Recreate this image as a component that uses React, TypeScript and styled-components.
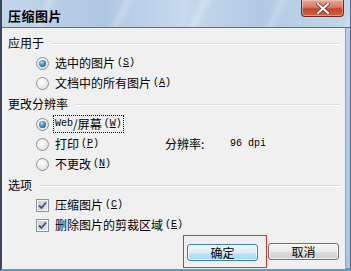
import styled, { createGlobalStyle } from 'styled-components';

const GlobalStyle = createGlobalStyle`
  html, body {
    margin: 0;
    padding: 0;
    background: #ffffff;
  }
  body {
    width: 351px;
    height: 271px;
    overflow: hidden;
    font-family: "Noto Sans CJK SC", "Noto Sans", sans-serif;
    color: #000;
  }
`;

const Window = styled.div`
  width: 351px;
  height: 271px;
  box-sizing: border-box;
  display: flex;
  flex-direction: column;
  border-left: 2px solid #3b4756;
  border-right: 1px solid #4d6a86;
  border-bottom: 3px solid #5b9bc3;
  background: linear-gradient(180deg, #b7cfe7 0%, #a8c6e0 100%);
`;

const TitleBar = styled.div`
  height: 28px;
  flex-shrink: 0;
  box-sizing: border-box;
  display: flex;
  align-items: flex-start;
  justify-content: space-between;
  border-bottom: 1px solid #58708b;
  background:
    repeating-linear-gradient(115deg, rgba(255, 255, 255, 0) 0px, rgba(255, 255, 255, 0) 38px,
      rgba(255, 255, 255, 0.22) 44px, rgba(255, 255, 255, 0) 52px, rgba(255, 255, 255, 0) 70px),
    linear-gradient(90deg, #c4d7eb 0%, #aec7e1 28%, #c7daee 52%, #b0c9e3 74%, #c3d7ec 100%);
`;

const Title = styled.div`
  align-self: center;
  margin: 4px 0 0 6px;
  font-size: 13px;
  font-weight: 700;
  letter-spacing: 0.5px;
  line-height: 16px;
`;

const CloseButton = styled.div`
  width: 43px;
  height: 17px;
  margin-right: 6px;
  box-sizing: border-box;
  display: flex;
  align-items: center;
  justify-content: center;
  border: 1px solid #6b2a1e;
  border-top: none;
  border-radius: 0 0 4px 4px;
  background: linear-gradient(180deg, #e8a898 0%, #d77a63 45%, #c5452a 55%, #d0623f 100%);
  box-shadow: inset 0 0 0 1px rgba(255, 220, 210, 0.45);
`;

const Content = styled.div`
  flex: 1;
  margin-right: 4px;
  box-sizing: border-box;
  display: flex;
  flex-direction: column;
  padding: 4px 0 0 6px;
  background: #f0f0f0;
  border-right: 1px solid #8ba5bf;
  font-size: 12px;
`;

const GroupHeader = styled.div`
  height: 21px;
  display: flex;
  align-items: center;
  line-height: 21px;
`;

const GroupLine = styled.div`
  flex: 1;
  height: 0;
  margin: 2px 5px 0 7px;
  border-top: 1px solid #d5dce3;
  border-bottom: 1px solid #ffffff;
`;

const OptionRow = styled.div`
  height: 20px;
  display: flex;
  align-items: center;
  padding-left: 28px;
  line-height: 20px;
`;

const OptionMain = styled.div<{ $width?: number }>`
  display: flex;
  align-items: center;
  width: ${(p) => (p.$width ? `${p.$width}px` : 'auto')};
`;

const RadioDot = styled.span<{ $checked?: boolean }>`
  width: 13px;
  height: 13px;
  flex-shrink: 0;
  box-sizing: border-box;
  border-radius: 50%;
  border: 1px solid #8d9297;
  background: radial-gradient(circle at 40% 35%, #ffffff 0%, #e9eaec 55%, #cfd2d6 100%);
  display: flex;
  align-items: center;
  justify-content: center;
  margin-right: 4px;

  &::after {
    content: '';
    width: 7px;
    height: 7px;
    border-radius: 50%;
    background: ${(p) =>
      p.$checked
        ? 'radial-gradient(circle at 40% 35%, #b6e2fb 0%, #3b8ccb 45%, #124b7f 100%)'
        : 'transparent'};
  }
`;

const CheckBox = styled.span`
  width: 13px;
  height: 13px;
  flex-shrink: 0;
  box-sizing: border-box;
  border: 1px solid #8e9196;
  background: linear-gradient(135deg, #c4ccd8 0%, #dde3ea 100%);
  box-shadow: inset 0 0 0 1px #f4f5f7;
  display: flex;
  align-items: center;
  justify-content: center;
  margin-right: 4px;
`;

const Label = styled.span<{ $focused?: boolean }>`
  display: inline-flex;
  align-items: center;
  height: 16px;
  padding: 0 1px;
  border: 1px dotted ${(p) => (p.$focused ? '#000000' : 'transparent')};
  white-space: nowrap;
`;

const Latin = styled.span`
  font-family: "Liberation Mono", "DejaVu Sans Mono", monospace;
  font-size: 10px;
`;

const Key = styled.span`
  font-family: "Liberation Mono", "DejaVu Sans Mono", monospace;
  font-size: 10px;
  margin-left: 2px;

  u {
    text-decoration: underline;
    text-underline-offset: 1px;
  }
`;

const InfoLabel = styled.span`
  width: 65px;
  white-space: nowrap;
`;

const InfoValue = styled.span`
  font-family: "Liberation Mono", "DejaVu Sans Mono", monospace;
  font-size: 10px;
  white-space: pre;
`;

const ButtonRow = styled.div`
  margin-top: auto;
  display: flex;
  align-items: flex-end;
  justify-content: flex-end;
  padding: 0 6px 1px 0;
`;

const Annotation = styled.div`
  padding: 8px 8px 6px 3px;
  border: 1px solid #d8322e;
`;

const Button = styled.div<{ $default?: boolean }>`
  width: 71px;
  height: 17px;
  box-sizing: border-box;
  display: flex;
  align-items: center;
  justify-content: center;
  border-radius: 3px;
  font-size: 12px;
  border: 1px solid ${(p) => (p.$default ? '#3c7fb1' : '#707070')};
  background: ${(p) =>
    p.$default
      ? 'linear-gradient(180deg, #eaf6fd 0%, #d9f0fc 50%, #bee6fd 51%, #a7d9f5 100%)'
      : 'linear-gradient(180deg, #f2f2f2 0%, #ebebeb 50%, #dddddd 51%, #cfcfcf 100%)'};
  box-shadow: inset 0 0 0 1px rgba(255, 255, 255, 0.7);
`;

const CancelButton = styled(Button)`
  margin: 0 0 8px 1px;
`;

const CheckMark = () => (
  <svg width="9" height="9" viewBox="0 0 9 9">
    <path d="M1 4.5 L3.5 7 L8 1.5" fill="none" stroke="#3f5275" strokeWidth="1.8" />
  </svg>
);

const CloseGlyph = () => (
  <svg width="14" height="11" viewBox="0 0 14 11">
    <path d="M2 1 L12 10 M12 1 L2 10" stroke="#6b2a1e" strokeWidth="3.6" strokeLinecap="square" />
    <path d="M2 1 L12 10 M12 1 L2 10" stroke="#ffffff" strokeWidth="2.2" strokeLinecap="square" />
  </svg>
);

const AccessKey = ({ k }: { k: string }) => (
  <Key>
    (<u>{k}</u>)
  </Key>
);

export default function App() {
  return (
    <>
      <GlobalStyle />
      <Window>
        <TitleBar>
          <Title>压缩图片</Title>
          <CloseButton>
            <CloseGlyph />
          </CloseButton>
        </TitleBar>
        <Content>
          <GroupHeader>
            应用于
            <GroupLine />
          </GroupHeader>
          <OptionRow>
            <RadioDot $checked />
            <Label>
              选中的图片 <AccessKey k="S" />
            </Label>
          </OptionRow>
          <OptionRow>
            <RadioDot />
            <Label>
              文档中的所有图片 <AccessKey k="A" />
            </Label>
          </OptionRow>

          <GroupHeader>
            更改分辨率
            <GroupLine />
          </GroupHeader>
          <OptionRow>
            <RadioDot $checked />
            <Label $focused>
              <Latin>Web</Latin>/屏幕
              <AccessKey k="W" />
            </Label>
          </OptionRow>
          <OptionRow>
            <OptionMain $width={129}>
              <RadioDot />
              <Label>
                打印
                <AccessKey k="P" />
              </Label>
            </OptionMain>
            <InfoLabel>分辨率:</InfoLabel>
            <InfoValue>96 dpi</InfoValue>
          </OptionRow>
          <OptionRow>
            <RadioDot />
            <Label>
              不更改
              <AccessKey k="N" />
            </Label>
          </OptionRow>

          <GroupHeader>
            选项
            <GroupLine />
          </GroupHeader>
          <OptionRow>
            <CheckBox>
              <CheckMark />
            </CheckBox>
            <Label>
              压缩图片 <AccessKey k="C" />
            </Label>
          </OptionRow>
          <OptionRow>
            <CheckBox>
              <CheckMark />
            </CheckBox>
            <Label>
              删除图片的剪裁区域 <AccessKey k="E" />
            </Label>
          </OptionRow>

          <ButtonRow>
            <Annotation>
              <Button $default>确定</Button>
            </Annotation>
            <CancelButton>取消</CancelButton>
          </ButtonRow>
        </Content>
      </Window>
    </>
  );
}
